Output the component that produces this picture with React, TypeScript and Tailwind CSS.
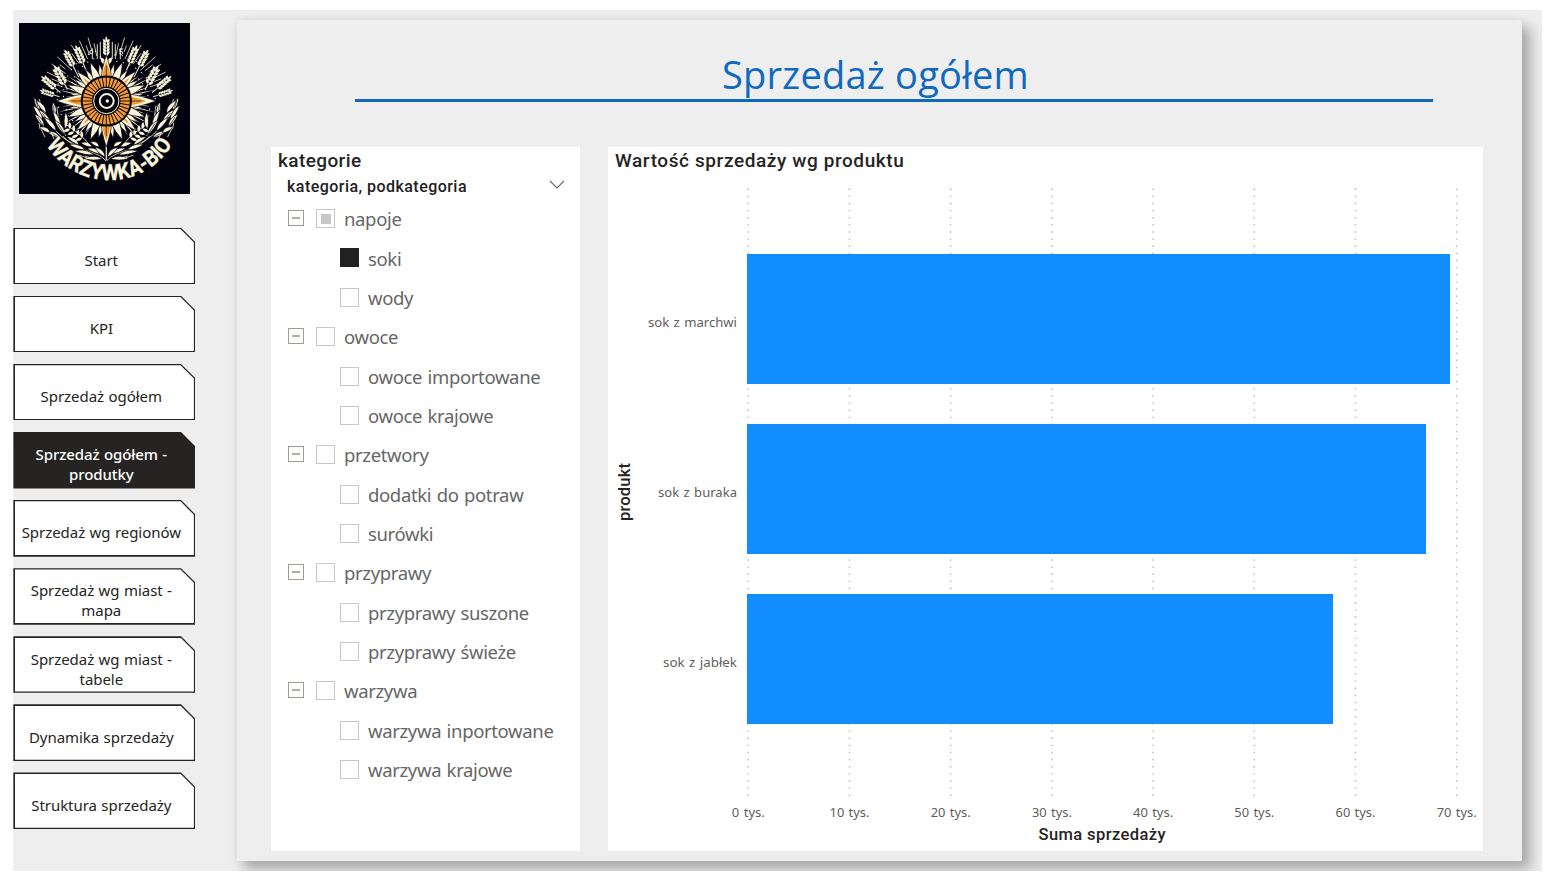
import React from "react";

const CREAM = "#fbf5dc";
const ORANGE = "#f29a30";
const NIGHT = "#02020f";

const leafPath = (len: number, w: number) =>
  `M0 0Q${w} ${-len * 0.45} 0 ${-len}Q${-w} ${-len * 0.45} 0 0Z`;

const curvedLeaf = (len: number, w: number) =>
  `M0 0C${w * 1.2} ${-len * 0.3} ${w * 0.8} ${-len * 0.7} ${-w * 0.6} ${-len}C${-w * 0.9} ${-len * 0.6} ${-w * 0.7} ${-len * 0.3} 0 0Z`;

function Wheat({ x, y, angle, size, stem }: { x: number; y: number; angle: number; size: number; stem: number }) {
  const rows = [0, 1, 2, 3, 4];
  return (
    <g transform={`translate(${x} ${y}) rotate(${angle}) scale(${size})`}>
      <path d={`M0 0V${stem}`} stroke={CREAM} strokeWidth="1.1" />
      <path d={leafPath(6.5, 2.4)} transform="translate(0 -14)" fill={CREAM} />
      {rows.map((r) => (
        <g key={r} transform={`translate(0 ${-r * 3.3})`}>
          <path d={leafPath(5.4, 2.9)} transform="translate(0.3 0) rotate(38)" fill={CREAM} />
          <path d={leafPath(5.4, 2.9)} transform="translate(-0.3 0) rotate(-38)" fill={CREAM} />
        </g>
      ))}
    </g>
  );
}

const OUTER_LEAVES = [
  [20, 88, -14, 14], [23, 97, -26, 17], [25, 104, -30, 16], [27, 90, -32, 16],
  [32, 102, -34, 20], [37, 108, -36, 18], [35, 93, 2, 14], [41, 106, -16, 20],
  [46, 112, -30, 18], [46, 106, 8, 17], [41, 115, -58, 15], [31, 110, -52, 12],
];
const INNER_LEAVES = [
  [66, 127, -66, 17], [75, 132, -74, 20], [83, 136, -84, 18], [60, 122, -50, 15],
  [82, 131, -62, 15], [86, 134, -40, 14], [73, 124, -62, 12], [80, 124, -50, 10],
];
const TWIG = [
  [51, 106], [55, 109], [59, 112], [63, 115],
];

function Branch({ flip }: { flip?: boolean }) {
  return (
    <g transform={flip ? "translate(174.6 0) scale(-1 1)" : undefined} fill={CREAM}>
      <path d="M87 138C77 126 58 130 44 113M55 121C40 114 30 104 20 76M47 113C41 104 39 96 38 84" fill="none" stroke={CREAM} strokeWidth="0.8" />
      {OUTER_LEAVES.map(([x, y, a, l], i) => (
        <g key={i} transform={`translate(${x} ${y}) rotate(${a})`}>
          <path d={curvedLeaf(l, 3)} stroke={NIGHT} strokeWidth="0.7" />
          {i % 2 === 0 && <path d={`M0 -1L-0.6 ${-l * 0.75}`} stroke={NIGHT} strokeWidth="0.6" />}
        </g>
      ))}
      {INNER_LEAVES.map(([x, y, a, l], i) => (
        <g key={i} transform={`translate(${x} ${y}) rotate(${a})`}>
          <path d={curvedLeaf(l, 2.8)} stroke={NIGHT} strokeWidth="0.7" />
        </g>
      ))}
      <path d="M48 102C55 108 64 112 70 122" fill="none" stroke={CREAM} strokeWidth="0.8" />
      {TWIG.map(([x, y], i) => (
        <g key={i} transform={`translate(${x} ${y})`}>
          <path d={leafPath(7, 3)} transform="rotate(-4)" />
          <path d={leafPath(7, 3)} transform="rotate(-112)" />
        </g>
      ))}
      <path d="M22 106L26 114M20 100L21 106M32 109L35 116M60 132L68 135M66 133L75 136" stroke={CREAM} strokeWidth="0.8" />
    </g>
  );
}

function Logo() {
  const petals = Array.from({ length: 32 }, (_, i) => i);
  const rays = Array.from({ length: 37 }, (_, i) => i);
  const cells = Array.from({ length: 36 }, (_, i) => i);
  const dots = Array.from({ length: 54 }, (_, i) => i);
  const sideRays = [52, 57, 62, 67, 72, 77, 83, 97, 103, 108, 113, 118, 123, 128, 140, 148];
  return (
    <svg className="block h-[171px] w-[171px]" viewBox="0 0 171 171" fill="none">
      <rect width="171" height="171" fill={NIGHT} />
      <g transform="translate(87.3 78)">
        {rays.map((i) => {
          const a = -72 + i * 4;
          return Math.abs(a) < 10 ? null : (
            <path key={i} d={`M0 ${-46 - (i % 3) * 3}V${i % 2 ? -59 : -66}`} transform={`rotate(${a})`} stroke={CREAM} strokeWidth="0.7" />
          );
        })}
        {[-14, -9, -6, 6, 9, 14].map((x) => (
          <path key={x} d={`M${x} -42V${-64 + Math.abs(x) * 0.8}`} stroke={CREAM} strokeWidth="0.9" />
        ))}
        <circle cx="-15" cy="-49" r="1.6" stroke={CREAM} strokeWidth="1" />
        <path d="M17 -52H13.5V-49.5Q17 -50 16.5 -47.5Q15.5 -46 13.5 -47" stroke={CREAM} strokeWidth="0.9" />
        {dots.map((i) => (
          <circle key={i} cx="0" cy={-39 - ((i * 7) % 13)} r="0.65" transform={`rotate(${-120 + i * 4.5})`} fill={CREAM} />
        ))}
        {sideRays.map((a, i) =>
          [a, -a].map((b) => (
            <path key={b} d={`M-1 -26L0 ${-41 - (i % 3) * 4}L1 -26Z`} transform={`rotate(${b})`} fill={CREAM} />
          ))
        )}
      </g>
      <Wheat x={87.3} y={32} angle={0} size={0.92} stem={9} />
      <path d={leafPath(9, 4)} transform="translate(86.5 42) rotate(-32)" fill={CREAM} />
      <path d={leafPath(9, 4)} transform="translate(88.1 42) rotate(32)" fill={CREAM} />
      <Wheat x={64} y={40} angle={-23} size={0.95} stem={10} />
      <Wheat x={110.6} y={40} angle={23} size={0.95} stem={10} />
      <Wheat x={54} y={43} angle={-27} size={0.9} stem={14} />
      <Wheat x={120.6} y={43} angle={27} size={0.9} stem={14} />
      <Wheat x={45.5} y={61} angle={-29} size={1.05} stem={6} />
      <Wheat x={129.1} y={61} angle={29} size={1.05} stem={6} />
      <Wheat x={36} y={65} angle={-49} size={0.9} stem={8} />
      <Wheat x={138.6} y={65} angle={49} size={0.9} stem={8} />
      <Wheat x={35} y={72} angle={-72} size={0.75} stem={8} />
      <Wheat x={139.6} y={72} angle={72} size={0.75} stem={8} />
      <Branch />
      <Branch flip />
      <path d="M87.3 108V137" stroke={CREAM} strokeWidth="1.2" />
      <g transform="translate(87.3 78)">
        {petals.map((i) =>
          i % 2 ? (
            <path key={i} d="M-2.6 -24Q-2.4 -30 0.4 -38Q2.8 -30 2.6 -24Z" transform={`rotate(${i * 11.25})`} fill={CREAM} stroke={NIGHT} strokeWidth="0.6" />
          ) : null
        )}
        {[22.5, 45, 67.5, 112.5, 135, 157.5, 202.5, 225, 247.5, 292.5, 315, 337.5].map((a) => (
          <g key={a} transform={`rotate(${a})`}>
            <path d="M-4 -23Q-4 -31 0 -42Q4 -31 4 -23Z" fill={CREAM} stroke={NIGHT} strokeWidth="0.7" />
            {a % 45 === 0 && <path d="M-1.3 -24L0 -34L1.3 -24Z" fill={ORANGE} />}
          </g>
        ))}
        {[0, 90, 180, 270].map((a) => (
          <g key={a} transform={`rotate(${a})`}>
            <path
              d={a % 180 ? "M-7 -23Q-5.5 -34 0 -50Q5.5 -34 7 -23Z" : "M-5 -23Q-5 -31 0 -46Q5 -31 5 -23Z"}
              fill={CREAM}
              stroke={NIGHT}
              strokeWidth="0.7"
            />
            <path d="M-4.2 -25Q-3 -32 0 -40Q3 -32 4.2 -25Z" fill={ORANGE} />
            <path d="M0 -24V-35" stroke={NIGHT} strokeWidth="0.6" />
          </g>
        ))}
        <circle r="25.6" fill={NIGHT} />
        <circle r="23.6" fill={ORANGE} />
        {cells.map((i) => (
          <path key={i} d="M0 -14V-24" transform={`rotate(${i * 10})`} stroke={NIGHT} strokeWidth="0.9" />
        ))}
        <circle r="14.2" fill={NIGHT} />
        <circle r="12.6" stroke={CREAM} strokeWidth="1" />
        <circle r="7" cx="0.4" cy="0" stroke={CREAM} strokeWidth="1.9" />
        <circle r="1.7" cx="1" cy="0" fill={CREAM} />
      </g>
      <path id="logo-arc" d="M27 121A73.5 73.5 0 0 0 154.5 119.5" />
      <text fill={CREAM} stroke={CREAM} strokeWidth="0.3" className="font-['Roboto',sans-serif] text-[22px] font-bold">
        <textPath href="#logo-arc" startOffset="1" textLength="151" lengthAdjust="spacingAndGlyphs">
          WARZYWKA-BIO
        </textPath>
      </text>
    </svg>
  );
}

const NAV: { lines: string[]; active?: boolean }[] = [
  { lines: ["Start"] },
  { lines: ["KPI"] },
  { lines: ["Sprzedaż ogółem"] },
  { lines: ["Sprzedaż ogółem -", "produtky"], active: true },
  { lines: ["Sprzedaż wg regionów"] },
  { lines: ["Sprzedaż wg miast -", "mapa"] },
  { lines: ["Sprzedaż wg miast -", "tabele"] },
  { lines: ["Dynamika sprzedaży"] },
  { lines: ["Struktura sprzedaży"] },
];

function NavButton({ lines, active }: (typeof NAV)[number]) {
  return (
    <button className="h-[56.6px] w-[181.8px] bg-[#252423] p-[1.3px] [clip-path:polygon(0_0,167.6px_0,181.8px_14.2px,181.8px_100%,0_100%)]">
      <span
        className={`flex h-full w-full flex-col items-center justify-center pt-[8px] pr-[6px] font-['Noto_Sans',sans-serif] text-[15px] leading-5 whitespace-nowrap [clip-path:polygon(0_0,165.8px_0,179.2px_13.4px,179.2px_100%,0_100%)] [word-spacing:0.6px] ${
          active ? "bg-[#252423] tracking-[-0.1px] font-medium text-white" : "bg-white tracking-[-0.05px] text-[#252423]"
        }`}
      >
        {lines.map((l) => (
          <span key={l}>{l}</span>
        ))}
      </span>
    </button>
  );
}

type State = "off" | "on" | "partial";
const TREE: { label: string; group?: boolean; state: State }[] = [
  { label: "napoje", group: true, state: "partial" },
  { label: "soki", state: "on" },
  { label: "wody", state: "off" },
  { label: "owoce", group: true, state: "off" },
  { label: "owoce importowane", state: "off" },
  { label: "owoce krajowe", state: "off" },
  { label: "przetwory", group: true, state: "off" },
  { label: "dodatki do potraw", state: "off" },
  { label: "surówki", state: "off" },
  { label: "przyprawy", group: true, state: "off" },
  { label: "przyprawy suszone", state: "off" },
  { label: "przyprawy świeże", state: "off" },
  { label: "warzywa", group: true, state: "off" },
  { label: "warzywa inportowane", state: "off" },
  { label: "warzywa krajowe", state: "off" },
];

function CheckBox({ state }: { state: State }) {
  if (state === "on") return <span className="mb-[1px] h-[19px] w-[19px] shrink-0 bg-[#212121]" />;
  return (
    <span className="flex h-[19px] w-[19px] shrink-0 items-center justify-center border border-[#c4c8d2] bg-white">
      {state === "partial" && <span className="h-[10px] w-[10px] bg-[#c8c8c8]" />}
    </span>
  );
}

function Slicer() {
  return (
    <section className="h-[704px] w-[309px] bg-white">
      <h2 className="h-[28px] pl-[7px] font-['Roboto',sans-serif] text-[19px] leading-[27px] font-medium tracking-[0.4px] text-[#252423]">kategorie</h2>
      <div className="flex h-[24px] items-center justify-between pr-[15px] pl-[16px]">
        <h3 className="font-['Roboto',sans-serif] text-[16px] leading-6 font-medium tracking-[0.46px] text-[#212121]">kategoria, podkategoria</h3>
        <svg className="mb-[5px] h-[9px] w-[16px]" viewBox="0 0 16 9" fill="none" stroke="#666" strokeWidth="1.1">
          <path d="M1 1L8 8L15 1" />
        </svg>
      </div>
      <ul>
        {TREE.map((n) => (
          <li key={n.label} className={`flex h-[39.36px] items-center ${n.group ? "pl-[17px]" : "pl-[69px]"}`}>
            {n.group && (
              <span className="mr-[12px] mb-[1px] flex h-[16px] w-[16px] shrink-0 items-center justify-center border-[1.5px] border-[#a39a94]">
                <span className="h-[2px] w-[8px] bg-[#b0acac]" />
              </span>
            )}
            <CheckBox state={n.state} />
            <span className="ml-[9px] pt-[1px] font-['Noto_Sans',sans-serif] text-[18.5px] leading-6 tracking-[-0.35px] whitespace-nowrap text-[#666] [word-spacing:1px]">{n.label}</span>
          </li>
        ))}
      </ul>
    </section>
  );
}

const BARS = [
  { label: "sok z marchwi", y: 107, width: 703, lw: 89 },
  { label: "sok z buraka", y: 277, width: 679, lw: 79 },
  { label: "sok z jabłek", y: 447, width: 586, lw: 74 },
];
const TICKS = [0, 10, 20, 30, 40, 50, 60, 70];

function Chart() {
  return (
    <section className="h-[704px] w-[875px] bg-white">
      <h2 className="h-[28px] pl-[7px] font-['Roboto',sans-serif] text-[19px] leading-[28px] font-medium tracking-[0.6px] text-[#252423]">
        Wartość sprzedaży wg produktu
      </h2>
      <svg className="block h-[676px] w-[875px]" viewBox="0 28 875 676">
        {TICKS.map((t, i) => (
          <g key={t}>
            <path d={`M${140.3 + i * 101.2} 41.5V652`} stroke="#bdbdbd" strokeWidth="1.6" strokeDasharray="1.4 5.73" />
            <text
              x={140.3 + i * 101.2}
              y="670"
              textAnchor="middle"
              textLength={t ? 40 : 33}
              lengthAdjust="spacingAndGlyphs"
              className="fill-[#605e5c] font-['Noto_Sans',sans-serif] text-[13px] [word-spacing:1px]"
            >
              {t} tys.
            </text>
          </g>
        ))}
        {BARS.map((b) => (
          <g key={b.label}>
            <rect x="139" y={b.y} width={b.width} height="130" fill="#118dff" />
            <text
              x="129"
              y={b.y + 73}
              textAnchor="end"
              textLength={b.lw}
              lengthAdjust="spacingAndGlyphs"
              className="fill-[#605e5c] font-['Noto_Sans',sans-serif] text-[13px] [word-spacing:1px]"
            >
              {b.label}
            </text>
          </g>
        ))}
        <text x="494" y="693" textAnchor="middle" textLength="127" className="fill-[#252423] font-['Roboto',sans-serif] text-[16.5px] font-medium">
          Suma sprzedaży
        </text>
        <text transform="translate(22 345) rotate(-90)" textAnchor="middle" textLength="58" className="fill-[#252423] font-['Roboto',sans-serif] text-[16.5px] font-medium">
          produkt
        </text>
      </svg>
    </section>
  );
}

export default function App() {
  return (
    <main className="h-[886px] w-[1552px] overflow-hidden bg-white pt-[10px] pl-[13px]">
      <div className="flex h-[861px] w-[1529px] overflow-hidden bg-[#eeeeee]">
        <aside className="w-[224px] shrink-0 pt-[13px]">
          <div className="pl-[6px]">
            <Logo />
          </div>
          <nav className="mt-[33.7px] flex flex-col gap-[11.5px] pl-[0.4px]">
            {NAV.map((n) => (
              <NavButton key={n.lines.join(" ")} {...n} />
            ))}
          </nav>
        </aside>
        <div className="mt-[10px] h-[841px] w-[1284.5px] shrink-0 bg-[#eeeeee] shadow-[8px_8px_12px_1px_rgba(0,0,0,0.27),0_0_8px_rgba(0,0,0,0.07)]">
          <header className="ml-[118px] h-[82px] w-[1078px] border-b-[3px] border-[#0f69c0] pt-[28px] text-center">
            <h1 className="pr-[37px] font-['Open_Sans',sans-serif] text-[38px] leading-[52px] tracking-[0.25px] text-[#0f69c0]">Sprzedaż ogółem</h1>
          </header>
          <div className="mt-[45px] flex gap-[28px] pl-[34px]">
            <Slicer />
            <Chart />
          </div>
        </div>
      </div>
    </main>
  );
}
